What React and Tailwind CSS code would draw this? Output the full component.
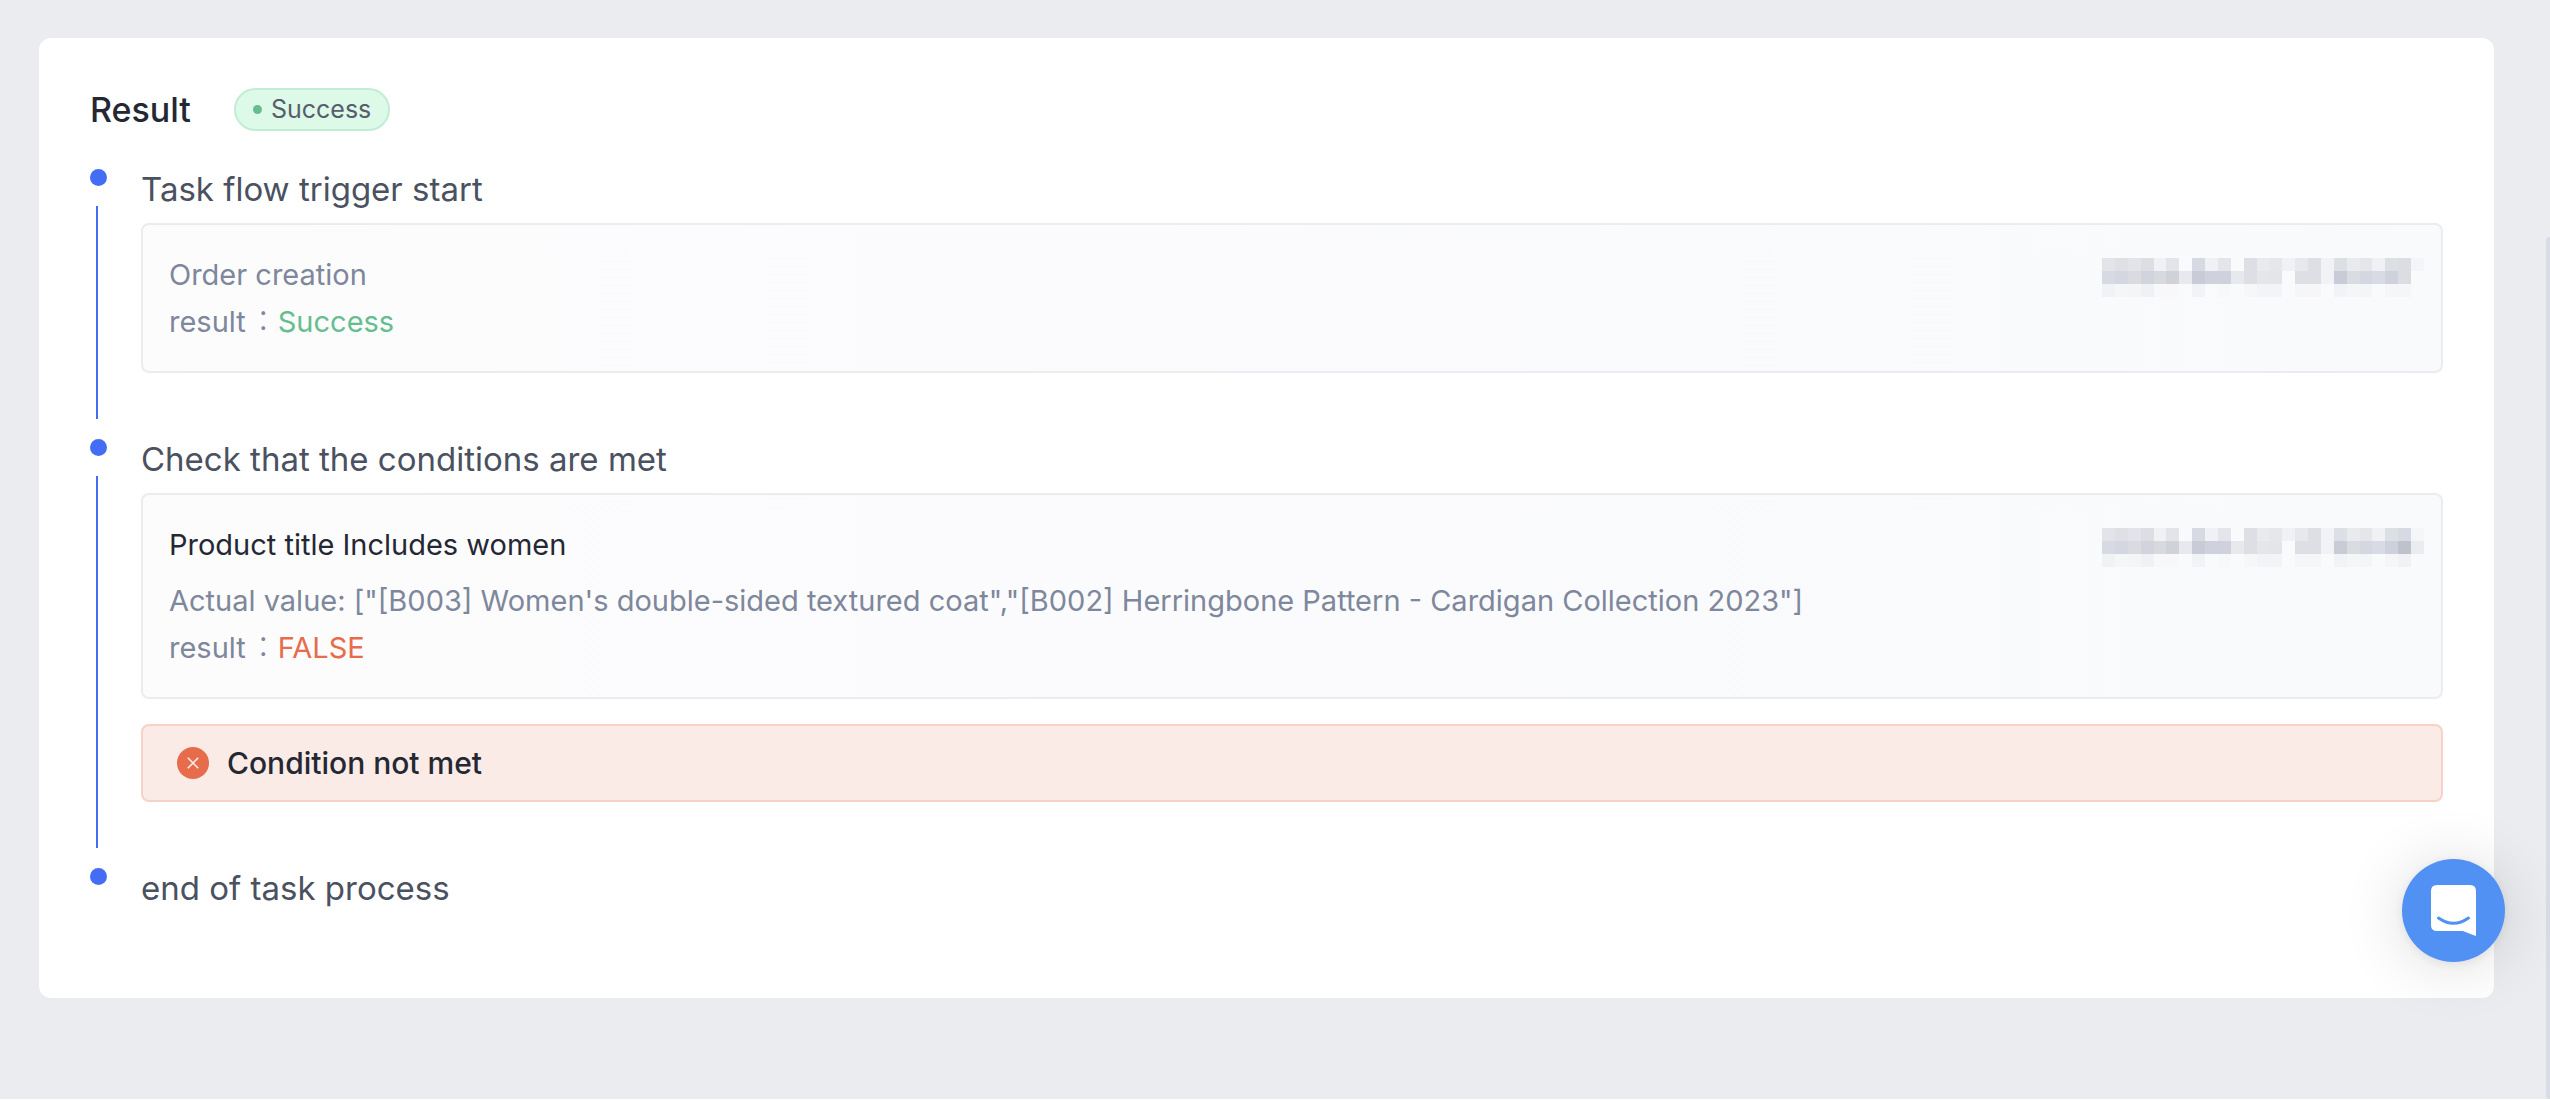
import { clsx } from "clsx";

const CELL = 13;

// "-" is an empty cell
const maskTop = "e3e4e9 dfe0e5 e3e4e9 dddee4 f0f1f5 e3e4e9 - d7dae2 f0f1f5 e4e5ea - dedfe4 e9eaee e6e7eb f0f1f4 e7e8ed dedfe4 f1f2f5 dce0e5 e9eaee e5e6ea f0f1f4";
const maskMiddle = "d7dae3 d4d7e0 dadbe1 d1d4dd d8d9de d0d2da e8e9ee c9ccd7 cfd2dc cfd2dc e8e9ed dedfe4 e5e6ea e4e5e9 - dedfe4 dedfe4 f1f2f6 c9ccd7 dbdce1 d4d7e0 d8dbe4";
const maskBottom = "f0f2f6 f5f6f8 f4f5f7 eff1f5 f8f8fa f8f8fa - f1f3f7 - f7f8fa - f6f7f9 f2f4f8 f2f4f8 - f6f6f9 f6f6f9 - f1f3f7 f5f6f8 f4f5f7 -";

const startMask = [
  `${maskTop} dce0e4 dcdde2 f3f5f8`,
  `${maskMiddle} cfd2dd dcdde2 -`,
  `${maskBottom} f6f6f8 f6f6f8 -`
];

const checkMask = [
  `${maskTop} dce0e4 d7dae2 f5f6f8`,
  `${maskMiddle} cdd1db bdc2cc ebecf0`,
  `${maskBottom} f6f6f8 f0f2f5 -`
];

function MaskedTime({ rows }) {
  return (
    <svg className="h-[39px] w-[322px] shrink-0" viewBox="0 0 325 39" preserveAspectRatio="none" shapeRendering="crispEdges" aria-hidden="true">
      {rows.map((row, y) =>
        row.split(" ").map((color, x) =>
          color === "-" ? null : (
            <rect key={`${x}-${y}`} x={x * CELL} y={y * CELL} width={CELL} height={CELL} fill={`#${color}`} />
          )
        )
      )}
    </svg>
  );
}

function Step({ title, last, children }) {
  return (
    <li className="flex gap-[34px]">
      <div className="flex w-[17px] shrink-0 flex-col">
        <span className="size-[17px] shrink-0 rounded-full bg-[#446df6]" />
        {!last && <span className="my-5 ml-[6px] w-[2px] grow bg-[#446df6]" />}
      </div>
      <div className={clsx("min-w-0 grow", last ? "pb-[90px]" : "pb-[66px]")}>
        <h2 className="text-[33px] leading-[40px] text-[#4a5160]">{title}</h2>
        {children}
      </div>
    </li>
  );
}

function LogBox({ mask, children }) {
  return (
    <div className="mt-[14px] flex items-start justify-between rounded-lg border-2 border-[#ebecf0] bg-linear-to-r from-[#fcfcfd] to-[#f9fafc] py-[26px] pr-[17px] pl-[26px] text-[29px] leading-[47px] text-[#7e879b]">
      <div>{children}</div>
      <div className="pt-[7px]">
        <MaskedTime rows={mask} />
      </div>
    </div>
  );
}

function ResultLine({ ok, children }) {
  return (
    <p>
      result<span className="pl-[3px] font-light">：</span>
      <span className={ok ? "text-[#66be8f]" : "text-[#e76c4b]"}>{children}</span>
    </p>
  );
}

export default function App() {
  return (
    <div className="relative font-['Inter','Noto_Sans_CJK_TC',sans-serif]">
      <main className="bg-[#ebecf0] pt-[38px] pr-14 pb-[101px] pl-[39px]">
        <section className="rounded-xl bg-white px-[51px] pt-[50px]">
          <header className="flex items-center gap-[43px]">
            <h1 className="text-[34px] leading-[43px] font-medium text-[#242833]">Result</h1>
            <span className="flex h-[43px] items-center gap-[9px] rounded-full border-2 border-[#c2edd5] bg-[#ddf9e8] px-[17px] text-[25px] text-[#565d6b]">
              <span className="size-[9px] rounded-full bg-[#66be8f]" />
              Success
            </span>
          </header>

          <ol className="mt-[38px]">
            <Step title="Task flow trigger start">
              <LogBox mask={startMask}>
                <p>Order creation</p>
                <ResultLine ok>Success</ResultLine>
              </LogBox>
            </Step>

            <Step title="Check that the conditions are met">
              <LogBox mask={checkMask}>
                <p className="mb-[9px] text-[#242833]">Product title Includes women</p>
                <p>Actual value: ["[B003] Women's double-sided textured coat","[B002] Herringbone Pattern - Cardigan Collection 2023"]</p>
                <ResultLine>FALSE</ResultLine>
              </LogBox>
              <div role="alert" className="mt-[25px] flex h-[78px] items-center gap-[18px] rounded-lg border-2 border-[#f8d2c9] bg-[#fbebe7] pl-[34px] text-[30px] font-medium text-[#242833]">
                <svg className="size-8" viewBox="0 0 32 32" fill="none" aria-hidden="true">
                  <circle cx="16" cy="16" r="16" fill="#e76c4b" />
                  <path d="M10.800 10.800l10.400 10.400M21.200 10.800l-10.400 10.400" stroke="#fbebe7" strokeWidth="1.6" />
                </svg>
                Condition not met
              </div>
            </Step>

            <Step title="end of task process" last />
          </ol>
        </section>
      </main>

      <div className="absolute top-[237px] right-0 bottom-0 w-1 rounded-l bg-[#d9dbe6]" />

      <button
        type="button"
        aria-label="Open chat"
        className="fixed right-[45px] bottom-[138px] flex size-[103px] items-center justify-center rounded-full bg-[#5191f4] shadow-[0_2px_12px_rgba(0,0,0,0.08),0_4px_64px_rgba(0,0,0,0.14)]"
      >
        <svg className="h-[51px] w-[45px]" viewBox="0 0 45 51" fill="none" aria-hidden="true">
          <path d="M6 0H39Q45 0 45 6V51Q39 49 32 46H6Q0 46 0 40V6Q0 0 6 0Z" fill="#fff" />
          <path d="M7.5 33Q22.500 43.500 37.500 33" stroke="#5191f4" strokeWidth="3" strokeLinecap="round" />
        </svg>
      </button>
    </div>
  );
}
